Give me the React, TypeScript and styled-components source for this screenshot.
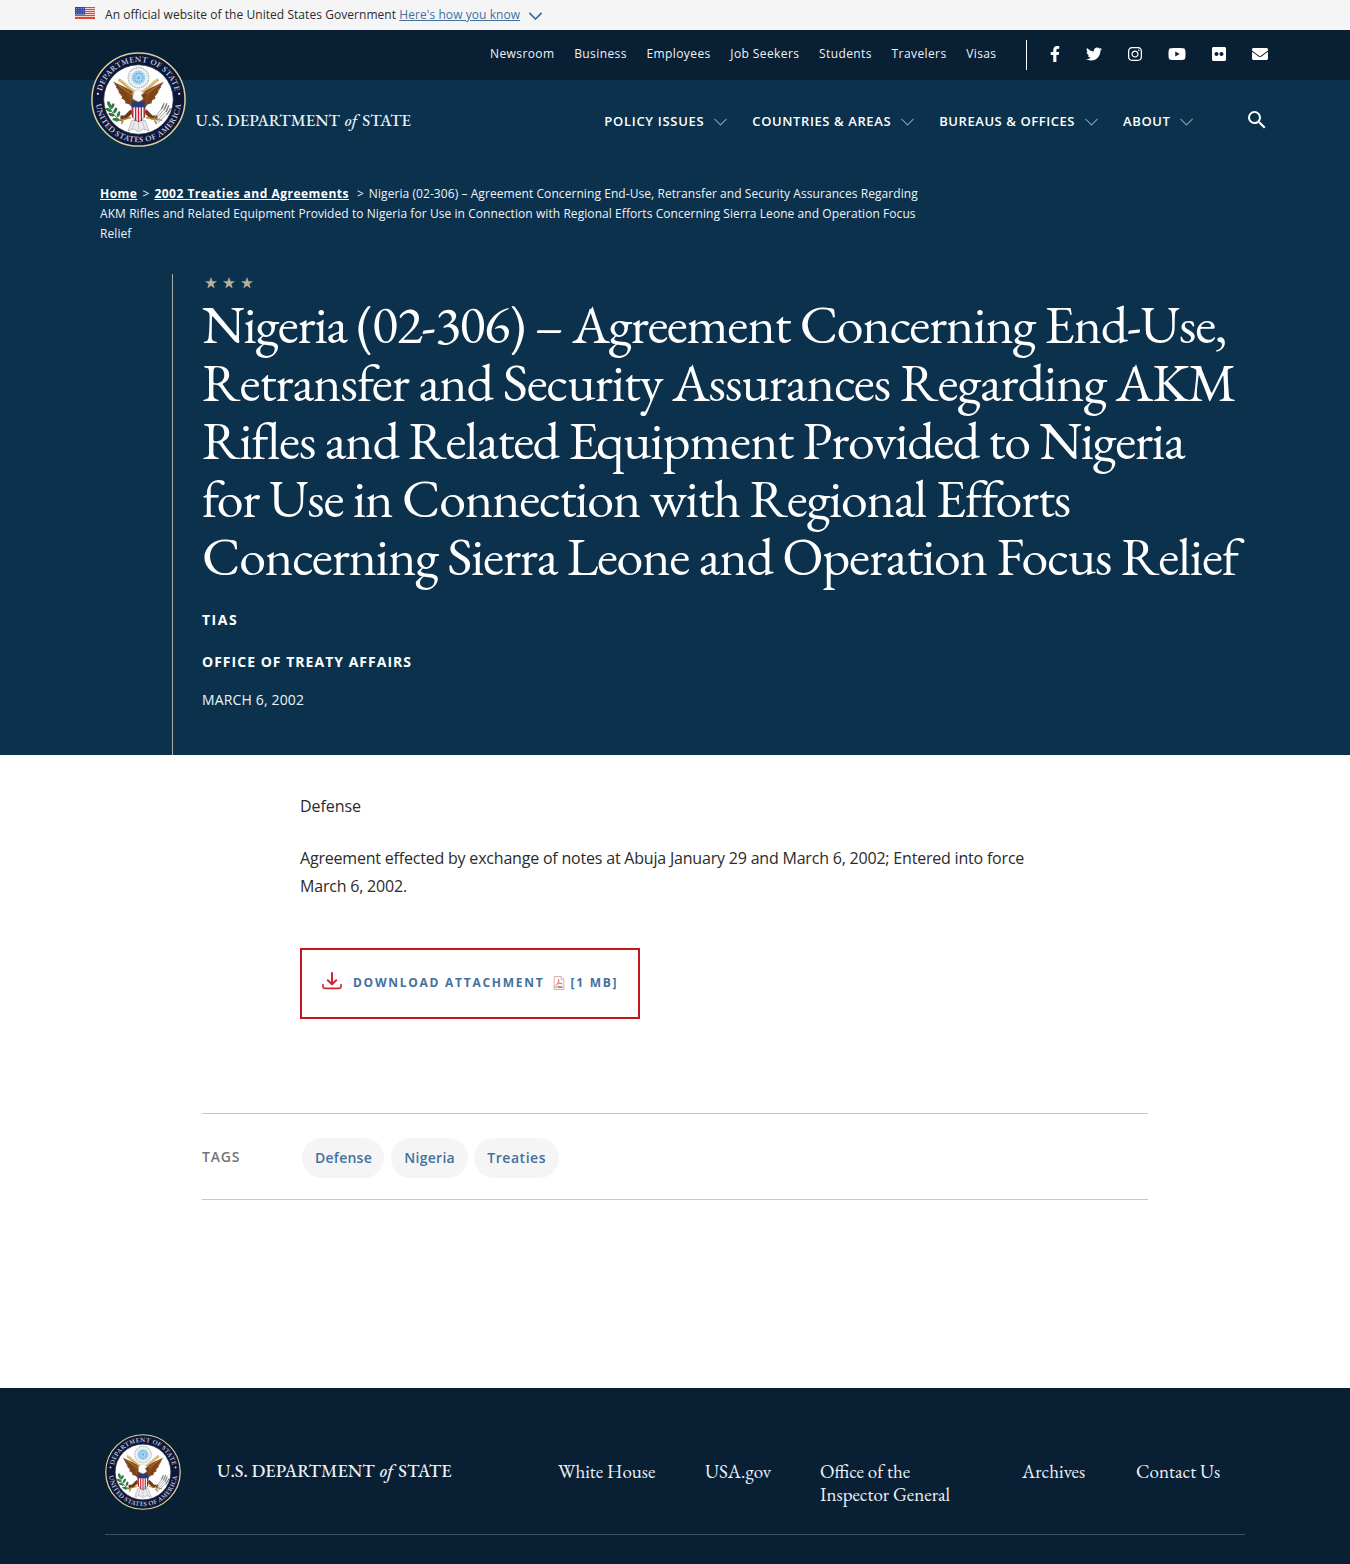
import React, { useId } from 'react';
import styled, { createGlobalStyle } from 'styled-components';
import {
  FaFacebookF,
  FaTwitter,
  FaInstagram,
  FaYoutube,
  FaFlickr,
  FaEnvelope,
} from 'react-icons/fa';
import { MdSearch } from 'react-icons/md';

const sans = "'Open Sans', 'Noto Sans', sans-serif";
const serif = "'EB Garamond', 'Liberation Serif', serif";
const navy = '#0b314d';
const midnight = '#091f33';
const link = '#43709f';

const GlobalStyle = createGlobalStyle`
  *, *::before, *::after { box-sizing: border-box; }
  body { margin: 0; background: #fff; color: #2b2b2b; font-family: ${sans}; }
  a { color: inherit; text-decoration: none; }
  h1, p { margin: 0; font-weight: 400; }
  svg { display: block; flex: none; }
`;

const Page = styled.div`
  width: 1350px;
  height: 1564px;
  overflow: hidden;
  display: flex;
  flex-direction: column;
`;

/* Government banner */
const Banner = styled.div`
  height: 30px;
  padding: 0 75px;
  display: flex;
  align-items: center;
  background: #f5f5f5;
  font-size: 12px;
  line-height: 20px;
  letter-spacing: 0.05px;
  white-space: pre;

  > svg:first-child { margin: 0 10px 4px 0; }
  > svg:last-child { margin-top: 1px; }
`;
const BannerLink = styled.a`
  color: ${link};
  letter-spacing: 0.07px;
  text-decoration: underline;
  margin-right: 9px;
`;

/* Header */
const TopBar = styled.div`
  height: 50px;
  padding-right: 82px;
  display: flex;
  align-items: center;
  justify-content: flex-end;
  background: ${midnight};
  color: #fff;
`;
const TopLinks = styled.nav`
  display: flex;
  gap: 19.7px;
  padding-bottom: 3px;
  font-size: 12px;
  line-height: 20px;
  letter-spacing: 0.4px;
  color: #eef3f7;
`;
const Divider = styled.span`
  width: 1px;
  height: 30px;
  margin: 0 23px 0 29.5px;
  background: #fff;
`;
const Social = styled.div`
  display: flex;
  gap: 26px;
  padding-bottom: 2px;
`;
const SocialLink = styled.a<{ $width: number }>`
  display: flex;

  svg { width: ${(p) => p.$width}px; height: 16px; }
`;
const Hero = styled.header`
  height: 675px;
  display: flex;
  flex-direction: column;
  background: ${navy};
  color: #fff;
`;
const MainBar = styled.div`
  height: 84px;
  padding: 0 82px 0 91px;
  display: flex;
  justify-content: space-between;
`;
const Brand = styled.a`
  display: flex;
  align-items: flex-start;
  gap: 9.5px;
  margin-top: -28px;
`;
const Wordmark = styled.span<{ $size: number; $top: number }>`
  display: flex;
  gap: 5px;
  margin-top: ${(p) => p.$top}px;
  font-family: ${serif};
  font-size: ${(p) => p.$size}px;
  font-weight: 500;
  line-height: 22px;
  color: #eaf2f8;
  white-space: nowrap;
`;
const MainNav = styled.nav`
  display: flex;
  align-items: center;
  height: 82px;
`;
const NavItem = styled.a<{ $tracking: number }>`
  display: flex;
  align-items: center;
  gap: 9.5px;
  margin-right: 25.5px;
  font-size: 13px;
  font-weight: 600;
  line-height: 20px;
  letter-spacing: ${(p) => p.$tracking}px;
  white-space: nowrap;

  svg { margin-top: 1px; }
`;
const SearchButton = styled.button`
  border: 0;
  padding: 0;
  margin: 0 -1px 2px 26.5px;
  background: none;
  color: #fff;
`;
const Breadcrumbs = styled.nav`
  width: 820px;
  margin: 20px 0 30px 100px;
  font-size: 12px;
  line-height: 20px;
  letter-spacing: 0.07px;
  color: #eef3f7;
`;
const Crumb = styled.a<{ $gap?: number }>`
  margin-right: ${(p) => p.$gap ?? 5}px;
  font-weight: 700;
  letter-spacing: 0.49px;
  text-decoration: underline;
  color: #fff;
`;
const Sep = styled.span`
  margin-right: 5px;
`;
const HeroBody = styled.div`
  flex: 1;
  margin-left: 172px;
  padding-left: 29px;
  border-left: 1px solid #a9aca9;
`;
const Stars = styled.div`
  height: 21px;
  padding: 3px 0 0 3px;
  display: flex;
  gap: 6px;
`;
const Title = styled.h1`
  margin-bottom: 25px;
  font-family: ${serif};
  font-size: 54px;
  line-height: 58px;
`;
const TitleLine = styled.span<{ $tracking: number }>`
  display: block;
  white-space: nowrap;
  letter-spacing: ${(p) => p.$tracking}px;
`;
const Kicker = styled.p<{ $tracking: number }>`
  margin-bottom: 22px;
  font-size: 14px;
  font-weight: 700;
  line-height: 20px;
  letter-spacing: ${(p) => p.$tracking}px;
`;
const PublishedOn = styled.p`
  margin-top: -4px;
  font-size: 14px;
  line-height: 20px;
  letter-spacing: 0.15px;
  color: #eef3f7;
`;

/* Content */
const Content = styled.main`
  flex: 1;
  padding: 37px 202px 0;
`;
const Article = styled.article`
  width: 760px;
  margin-left: 98px;
  display: flex;
  flex-direction: column;
  align-items: flex-start;
  gap: 24px;
`;
const Paragraph = styled.p<{ $tracking?: number }>`
  font-size: 16px;
  line-height: 28px;
  letter-spacing: ${(p) => p.$tracking ?? 0}px;
`;
const Download = styled.a`
  width: 340px;
  height: 71px;
  margin-top: 24px;
  padding: 0 20px 2px;
  display: flex;
  align-items: center;
  border: 2px solid #c5161f;
  color: ${link};
  font-size: 12px;
  font-weight: 700;
  line-height: 20px;
  letter-spacing: 1.74px;
  white-space: nowrap;

  > svg:first-child { margin: 0 11px 3px 0; }
  > svg:last-of-type { margin: 0 6px 0 8px; }
`;
const TagBar = styled.section`
  height: 87px;
  margin-top: 94px;
  display: flex;
  align-items: center;
  border: solid #c5c7c9;
  border-width: 1px 0;
`;
const TagLabel = styled.span`
  width: 100px;
  padding-top: 1px;
  font-size: 14px;
  font-weight: 600;
  line-height: 20px;
  letter-spacing: 0.8px;
  color: #757575;
`;
const Tags = styled.div`
  display: flex;
  gap: 6.7px;
  padding-top: 2px;
`;
const Tag = styled.a<{ $tracking: number }>`
  height: 40px;
  padding: 0 12.5px 0 13px;
  border-radius: 20px;
  background: #f5f5f5;
  color: ${link};
  font-size: 14px;
  font-weight: 600;
  line-height: 39px;
  letter-spacing: ${(p) => p.$tracking}px;
`;

/* Footer */
const Footer = styled.footer`
  height: 176px;
  padding: 46px 105px 0;
  background: ${midnight};
`;
const FooterRow = styled.div`
  height: 101px;
  display: flex;
  align-items: flex-start;
  border-bottom: 1px solid #3f5264;
`;
const FooterBrand = styled.a`
  width: 453px;
  display: flex;
  align-items: flex-start;
  gap: 36px;
`;
const FooterLinks = styled.nav`
  display: grid;
  grid-template-columns: 147px 115px 202px 114px auto;
  padding-top: 26px;
  color: #eaf2f8;
  font-family: ${serif};
  font-size: 19px;
  line-height: 23px;
`;
const FooterLink = styled.a`
  white-space: pre-line;
`;

function Flag() {
  return (
    <svg width="20" height="12" viewBox="0 0 20 12">
      <rect width="20" height="12" fill="#fbe9e4" />
      {[0, 2, 4, 6, 8, 10].map((y) => (
        <rect key={y} y={y} width="20" height="1.15" fill="#dd4a33" />
      ))}
      <rect y="11" width="20" height="1" fill="#dd4a33" />
      <rect width="10" height="7.6" fill="#2f45a5" />
      {[1.5, 3.8, 6.1].map((y) =>
        [1.5, 3.8, 6.1, 8.4].map((x) => (
          <circle key={`${x}-${y}`} cx={x} cy={y} r="0.5" fill="#c3cdf2" />
        )),
      )}
    </svg>
  );
}

function Chevron({ color, width = 1 }: { color: string; width?: number }) {
  return (
    <svg width="13" height="8" viewBox="0 0 13 8" fill="none">
      <path d="M0.4 0.9 6.5 7 12.6 0.9" stroke={color} strokeWidth={width} />
    </svg>
  );
}

function Star() {
  return (
    <svg width="12" height="12" viewBox="0 0 12 12">
      <path
        d="M6 0 7.5 4.2 12 4.3 8.4 7 9.7 11.5 6 8.8 2.3 11.5 3.6 7 0 4.3 4.5 4.2Z"
        fill="#bbad97"
      />
    </svg>
  );
}

function DownloadIcon() {
  return (
    <svg width="20" height="18" viewBox="0 0 20 18" fill="none" stroke="#cd2532" strokeWidth="2" strokeLinecap="round" strokeLinejoin="round">
      <path d="M10 1v11M5.8 8.2 10 12.4l4.2-4.2" />
      <path d="M1 12.6v2.2c0 1 .7 1.6 1.7 1.6h14.6c1 0 1.7-.6 1.7-1.6v-2.2" strokeWidth="1.6" />
    </svg>
  );
}

function PdfIcon() {
  return (
    <svg width="12" height="14" viewBox="0 0 12 14" fill="none">
      <path d="M1.2.5h7l2.6 2.8v10.2H1.2Z" fill="#fff" stroke="#d39d92" strokeWidth=".8" />
      <path d="M8 .6v2.9h2.8" stroke="#d39d92" strokeWidth=".7" />
      <path d="M5.3 3.4c1.5 0 .5 3-2.6 6.1M5.2 4c.3 2.3 1.6 3.6 4 4.1M3.4 8.4c2-1 3.9-1.3 5.9-1" stroke="#d0604f" strokeWidth=".7" />
      <rect x=".3" y="9.6" width="6" height="2.6" fill="#ecbcb3" />
      <path d="M5 10.2h4.6v1.8H5Z" fill="#b08a80" />
    </svg>
  );
}

const feathers = (
  <>
    <path d="M23 31 27 36 26 37 30 41 29 43 33 46 32 49 36 51 36 54 40 55 45 60 47 47 43 41 36 37Z" fill="#8a4d1d" />
    <path d="M25 34 38 45M28 40 40 49M31 45 41 52M35 50 42 55" stroke="#5d2f10" strokeWidth=".8" fill="none" />
    <path d="M29 35 42 44" stroke="#b47a35" strokeWidth="1" />
  </>
);

function Seal({ size }: { size: number }) {
  const id = useId();
  return (
    <svg width={size} height={size} viewBox="0 0 100 100" role="img">
      <defs>
        <path id={`${id}t`} d="M10.6 50A39.4 39.4 0 0 1 89.4 50" />
        <path id={`${id}b`} d="M5 50A45 45 0 0 0 95 50" />
      </defs>
      <circle cx="50" cy="50" r="49" fill="#0d1737" stroke="#d9cf9b" strokeWidth="1.6" />
      <circle cx="50" cy="50" r="36.6" fill="#fff" stroke="#2a3050" strokeWidth=".8" />
      <g fill="#c3c9dc" fontFamily="'EB Garamond', 'Liberation Serif', serif" fontSize="8.6" fontWeight="600">
        <text textAnchor="middle" textLength="106">
          <textPath href={`#${id}t`} startOffset="50%">DEPARTMENT OF STATE</textPath>
        </text>
        <text textAnchor="middle" textLength="131">
          <textPath href={`#${id}b`} startOffset="50%">UNITED STATES OF AMERICA</textPath>
        </text>
      </g>
      <circle cx="7.2" cy="44" r="1.2" fill="#e4e6ee" />
      <circle cx="92.8" cy="44" r="1.2" fill="#e4e6ee" />

      {/* glory and constellation */}
      <circle cx="50" cy="27" r="10.8" fill="#eef1f2" stroke="#aab3b8" strokeWidth="1.4" strokeDasharray="1.6 .9" />
      <circle cx="50" cy="27" r="7.4" fill="#a4d4ef" />
      <circle cx="50" cy="27" r="4.6" fill="none" stroke="#5c9fcb" strokeWidth="1.3" strokeDasharray="1.4 1.2" />
      <circle cx="50" cy="27" r="1.3" fill="#5c9fcb" />

      {/* scroll */}
      <path d="M29 29c6 3 10 9 17 13M71 29c-6 3-10 9-17 13" fill="none" stroke="#c9a75c" strokeWidth="3" />
      <path d="M30 29c6 3 10 9 16 12.5M70 29c-6 3-10 9-16 12.5" fill="none" stroke="#efdcaa" strokeWidth=".9" />

      {/* wings */}
      {feathers}
      <g transform="translate(100 0) scale(-1 1)">{feathers}</g>

      {/* tail */}
      <path d="M43 72 39 83 45 81 50 84 55 81 61 83 57 72Z" fill="#e9ebea" stroke="#8f989c" strokeWidth=".6" />
      <path d="M46 73 43.5 81M50 73v9M54 73l2.5 8" stroke="#a4abae" strokeWidth=".6" />

      {/* legs and talons */}
      <path d="M43 62 36 69 31 69M57 62 64 69 70 69" fill="none" stroke="#6f3a16" strokeWidth="4.2" />
      <path d="M26 73 42 69M58 69 75 72M32 76 34 72M67 72 69 76" stroke="#b8862f" strokeWidth="1.5" />

      {/* head and body */}
      <path d="M42 44h16l-1.5 14h-13Z" fill="#774016" />
      <path d="M44 44.5c1-4 5-6 8-4l3 2-2 3 2 4-5 3-6-3Z" fill="#fafafa" stroke="#b3b3b3" strokeWidth=".5" />
      <path d="M44.5 42.5 41.8 44.4 45 45.4Z" fill="#d79a21" />

      {/* shield */}
      <path d="M43 53h14v12c0 4-3 6.5-7 8.5-4-2-7-4.5-7-8.5Z" fill="#fff" />
      <path d="M44 57v12M47 57v15.5M50 57v16.5M53 57v15.5M56 57v12" stroke="#be2237" strokeWidth="1.5" />
      <path d="M42.8 52.5h14.4v5.7H42.8Z" fill="#1f3e87" />
      <path d="M43 53h14v12c0 4-3 6.5-7 8.5-4-2-7-4.5-7-8.5Z" fill="none" stroke="#56323a" strokeWidth=".6" />

      {/* olive branch */}
      <path d="M18 53c2 9 7 16 15 20" fill="none" stroke="#3d6c33" strokeWidth="1" />
      <g fill="#2f7a42">
        <ellipse cx="19" cy="55" rx="1.7" ry="3.3" transform="rotate(-20 19 55)" />
        <ellipse cx="22.5" cy="57" rx="1.6" ry="3.2" transform="rotate(30 22.5 57)" />
        <ellipse cx="18.5" cy="61" rx="1.6" ry="3.2" transform="rotate(-60 18.5 61)" />
        <ellipse cx="25.5" cy="61.5" rx="1.6" ry="3.2" transform="rotate(30 25.5 61.5)" />
        <ellipse cx="21.5" cy="66" rx="1.6" ry="3.4" transform="rotate(-70 21.5 66)" />
        <ellipse cx="29" cy="65.5" rx="1.5" ry="3.2" transform="rotate(20 29 65.5)" />
        <ellipse cx="26" cy="71" rx="1.5" ry="3.4" transform="rotate(-80 26 71)" />
      </g>

      {/* arrows */}
      <path d="M66 73 79 58M68 74 81 60M70 75 82 63M65 71 77 57" stroke="#9a9d98" strokeWidth="1" />
      <path d="M74 60 77 54M77 61 80 54M79 63 82 56M80 66 84 59" stroke="#7f8484" strokeWidth="1.5" />
    </svg>
  );
}

function DepartmentName({ size, top }: { size: number; top: number }) {
  return (
    <Wordmark $size={size} $top={top}>
      <span>U.S. DEPARTMENT</span>
      <i>of</i>
      <span>STATE</span>
    </Wordmark>
  );
}

const topLinks = ['Newsroom', 'Business', 'Employees', 'Job Seekers', 'Students', 'Travelers', 'Visas'];

const socialLinks = [
  { name: 'Facebook', Icon: FaFacebookF, width: 10 },
  { name: 'Twitter', Icon: FaTwitter, width: 16 },
  { name: 'Instagram', Icon: FaInstagram, width: 14 },
  { name: 'YouTube', Icon: FaYoutube, width: 18 },
  { name: 'Flickr', Icon: FaFlickr, width: 14 },
  { name: 'Email', Icon: FaEnvelope, width: 16 },
];

const navItems = [
  { label: 'POLICY ISSUES', tracking: 0.7 },
  { label: 'COUNTRIES & AREAS', tracking: 0.6 },
  { label: 'BUREAUS & OFFICES', tracking: 0.57 },
  { label: 'ABOUT', tracking: 0.6 },
];

const titleLines = [
  { text: 'Nigeria (02-306) – Agreement Concerning End-Use,', tracking: -1.24 },
  { text: 'Retransfer and Security Assurances Regarding AKM', tracking: -1.02 },
  { text: 'Rifles and Related Equipment Provided to Nigeria', tracking: -1.2 },
  { text: 'for Use in Connection with Regional Efforts', tracking: -1.19 },
  { text: 'Concerning Sierra Leone and Operation Focus Relief', tracking: -1.18 },
];

const tags = [
  { label: 'Defense', tracking: 0.25 },
  { label: 'Nigeria', tracking: 0.3 },
  { label: 'Treaties', tracking: 0.55 },
];

const footerLinks = [
  'White House',
  'USA.gov',
  'Office of the\nInspector General',
  'Archives',
  'Contact Us',
];

export default function App() {
  return (
    <Page>
      <GlobalStyle />
      <Banner>
        <Flag />
        <span>An official website of the United States Government </span>
        <BannerLink href="#">Here's how you know</BannerLink>
        <Chevron color="#3f6d9c" width={1.7} />
      </Banner>

      <TopBar>
        <TopLinks>
          {topLinks.map((label) => (
            <a key={label} href="#">{label}</a>
          ))}
        </TopLinks>
        <Divider />
        <Social>
          {socialLinks.map(({ name, Icon, width }) => (
            <SocialLink key={name} href="#" aria-label={name} $width={width}>
              <Icon />
            </SocialLink>
          ))}
        </Social>
      </TopBar>

      <Hero>
        <MainBar>
          <Brand href="#">
            <Seal size={95} />
            <DepartmentName size={16.65} top={57} />
          </Brand>
          <MainNav>
            {navItems.map((item) => (
              <NavItem key={item.label} href="#" $tracking={item.tracking}>
                {item.label}
                <Chevron color="#8299ae" width={1.1} />
              </NavItem>
            ))}
            <SearchButton aria-label="Search">
              <MdSearch size={24} />
            </SearchButton>
          </MainNav>
        </MainBar>

        <Breadcrumbs>
          <Crumb href="#">Home</Crumb>
          <Sep>&gt;</Sep>
          <Crumb href="#" $gap={8}>2002 Treaties and Agreements</Crumb>
          <Sep>&gt;</Sep>
          Nigeria (02-306) – Agreement Concerning End-Use, Retransfer and Security Assurances
          Regarding AKM Rifles and Related Equipment Provided to Nigeria for Use in Connection with
          Regional Efforts Concerning Sierra Leone and Operation Focus Relief
        </Breadcrumbs>

        <HeroBody>
          <Stars>
            <Star />
            <Star />
            <Star />
          </Stars>
          <Title>
            {titleLines.map((line) => (
              <TitleLine key={line.text} $tracking={line.tracking}>{line.text}</TitleLine>
            ))}
          </Title>
          <Kicker $tracking={1.5}>TIAS</Kicker>
          <Kicker $tracking={1.02}>OFFICE OF TREATY AFFAIRS</Kicker>
          <PublishedOn>MARCH 6, 2002</PublishedOn>
        </HeroBody>
      </Hero>

      <Content>
        <Article>
          <Paragraph $tracking={-0.05}>Defense</Paragraph>
          <Paragraph $tracking={-0.2}>
            Agreement effected by exchange of notes at Abuja January 29 and March 6, 2002; Entered
            into force March 6, 2002.
          </Paragraph>
          <Download href="#">
            <DownloadIcon />
            DOWNLOAD ATTACHMENT
            <PdfIcon />
            [1 MB]
          </Download>
        </Article>
        <TagBar>
          <TagLabel>TAGS</TagLabel>
          <Tags>
            {tags.map((tag) => (
              <Tag key={tag.label} href="#" $tracking={tag.tracking}>{tag.label}</Tag>
            ))}
          </Tags>
        </TagBar>
      </Content>

      <Footer>
        <FooterRow>
          <FooterBrand href="#">
            <Seal size={76} />
            <DepartmentName size={18.2} top={26} />
          </FooterBrand>
          <FooterLinks>
            {footerLinks.map((label) => (
              <FooterLink key={label} href="#">{label}</FooterLink>
            ))}
          </FooterLinks>
        </FooterRow>
      </Footer>
    </Page>
  );
}
